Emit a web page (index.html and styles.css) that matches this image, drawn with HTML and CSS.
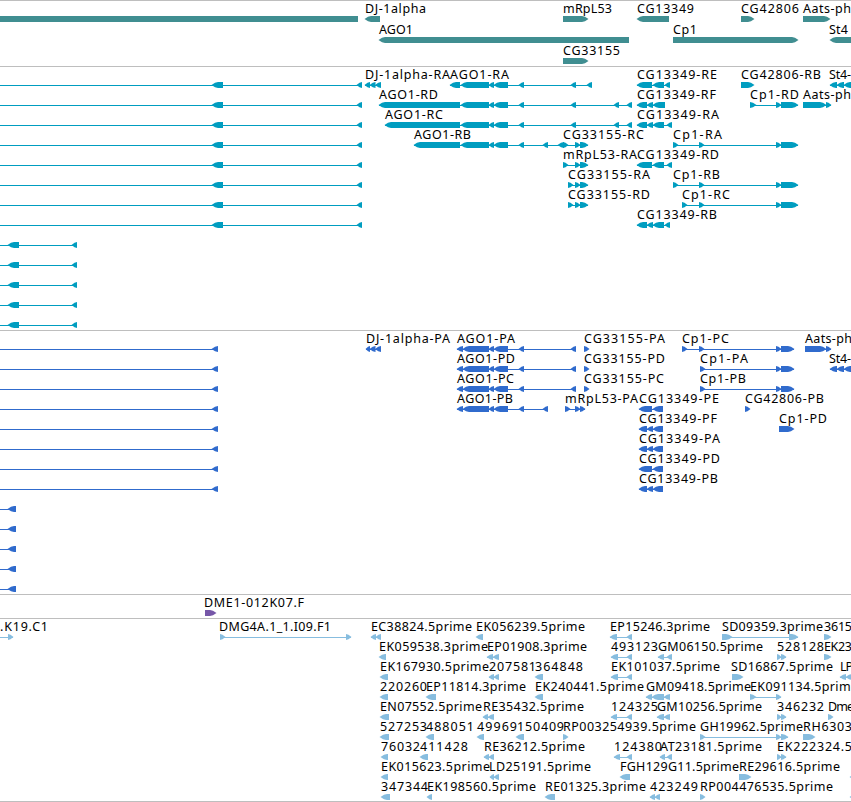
FILE: index.html
```
<!DOCTYPE html>
<html lang="en">
<head>
<meta charset="utf-8">
<title>Genome tracks</title>
<link rel="stylesheet" href="styles.css">
</head>
<body>
<main class="browser">
<section class="track genes"><svg id="genes" width="851" height="65"></svg></section>
<section class="track transcripts"><svg id="transcripts" width="851" height="263"></svg></section>
<section class="track proteins"><svg id="proteins" width="851" height="263"></svg></section>
<section class="track bac"><svg id="bac" width="851" height="23"></svg></section>
<section class="track est"><svg id="est" width="851" height="182"></svg></section>
</main>
<script src="tracks.js"></script>
</body>
</html>
```
FILE: styles.css
```
body { margin: 0; background: #fff; overflow: hidden; }
.browser { display: flex; flex-direction: column; width: 851px; }
.track { border-top: 1px solid #bebebe; }
.est { border-bottom: 1px solid #bebebe; }
.track svg { display: block; overflow: hidden; }
.track text { font: 12.5px "Noto Sans", "DejaVu Sans", sans-serif; fill: #000; }
.genes { color: #408e91; }
.transcripts { color: #009dc0; }
.proteins { color: #306bcd; }
.bac { color: #7657a8; }
.est { color: #87bddf; }
.feature { fill: currentColor; }
.intron { fill: currentColor; shape-rendering: crispEdges; }
```
FILE: tracks.js
```
// Each feature: row | label | label start | label end | strand | exon ranges
const SVG = "http://www.w3.org/2000/svg";

function add(parent, name, attrs) {
  const el = document.createElementNS(SVG, name);
  for (const key in attrs) el.setAttribute(key, attrs[key]);
  parent.appendChild(el);
  return el;
}

function draw(id, pitch, lines) {
  const svg = document.getElementById(id);
  lines.trim().split("\n").forEach(line => {
    const [row, label, start, end, strand, ranges] = line.split("|");
    const top = 15 + row * pitch;
    const exons = ranges.split(",").map(r => r.split(":").map(Number));
    const first = exons[0][0], last = exons[exons.length - 1][1];
    if (exons.length > 1) add(svg, "rect", { class: "intron", x: first, y: top + 3, width: last - first, height: 1 });
    exons.forEach(([a, b]) => {
      if (a < 0 && b <= 0) return;
      const w = b - a;
      const head = Math.min(w, 6);
      const bottom = top + 6, mid = top + 3;
      let points;
      if (strand === "-") {
        points = `${a - .5},${mid} ${a + head * .5},${top + .8} ${a + head},${top} ${b},${top} ${b},${bottom} ${a + head},${bottom} ${a + head * .5},${bottom - .8}`;
      } else if (strand === "+") {
        points = `${b + .5},${mid} ${b - head * .5},${top + .8} ${b - head},${top} ${a},${top} ${a},${bottom} ${b - head},${bottom} ${b - head * .5},${bottom - .8}`;
      } else {
        points = `${a},${top} ${b},${top} ${b},${bottom} ${a},${bottom}`;
      }
      add(svg, "polygon", { class: "feature", points });
    });
    if (label) {
      const text = add(svg, "text", { x: start, y: top - 3, textLength: end - start, lengthAdjust: "spacing" });
      text.textContent = label;
    }
  });
}

const rows = (from, to, rest) => Array.from({ length: to - from + 1 }, (_, i) => (from + i) + rest).join("\n");

draw("genes", 21, `
0||||=|0:358
0|DJ-1alpha|365|426|-|365:380
0|mRpL53|563|612|+|563:588
0|CG13349|637|694|-|637:669
0|CG42806|741|799|+|741:754
0|Aats-ph|803|851|+|803:830
1|AGO1|379|413|-|379:629
1|Cp1|673|697|+|673:798
1|St4|829|848|-|830:860
2|CG33155|563|620|+|563:588`);

draw("transcripts", 20, rows(0, 7, "||||-|-10:-5,212:223,357:362") + "\n" + rows(8, 12, "||||-|-10:-5,8:19,72:77") + `
0|DJ-1alpha-RA|365|450|-|365:370,370:375.5,375.5:381
0|AGO1-RA|450|509|-|450:460,461:489,489:494,494:508,519:524,571:576,587:592
1|AGO1-RD|379|438|-|379:460,461:489,489:494,494:508,519:524,571:576,614:619,627:632
2|AGO1-RC|385|443|-|385:460,461:489,489:494,494:508,519:524,571:576,614:619,627:632
3|AGO1-RB|414|471|-|414:460,461:489,489:494,494:508,519:524,543:548,558:564
3|CG33155-RC|563|644|+|563:568,575:580,580:588
4|mRpL53-RA|563|637|+|563:568,575:580,580:588
5|CG33155-RA|568|650|+|568:573,575:580,580:588
6|CG33155-RD|568|650|+|568:573,575:580,580:588
0|CG13349-RE|637|717|-|637:652,653:664,665:670
1|CG13349-RF|637|716|-|637:647,647:653,653:665
2|CG13349-RA|637|719|-|637:647,647:653,653:664,667:672
4|CG13349-RD|637|719|-|637:652,653:664,667:672
7|CG13349-RB|637|717|-|637:647,647:653,653:664,665:670
0|CG42806-RB|741|821|+|741:754
1|Cp1-RD|750|799|+|750:756,776:781,781:798
1|Aats-ph|803|851|+|803:826,826:831
0|St4-|829|851|-|830:837,837:844,844:852
3|Cp1-RA|673|722|+|673:678,699:704,776:781,781:798
5|Cp1-RB|673|720|+|673:678,699:704,776:781,781:798
6|Cp1-RC|682|730|+|682:687,699:704,776:781,781:798`);

draw("proteins", 20, rows(0, 7, "||||-|-10:-5,212:218") + "\n" + rows(8, 12, "||||-|-10:-5,8:16") + `
0|DJ-1alpha-PA|366|450|-|366:370,370:375.5,375.5:381
0|AGO1-PA|457|515|-|457:463,463:489,489:494,494:508,519:524,571:576
1|AGO1-PD|457|515|-|457:463,463:489,489:494,494:508,519:524,571:576
2|AGO1-PC|457|514|-|457:463,463:489,489:494,494:508,519:524,571:576
3|AGO1-PB|457|513|-|457:463,463:489,489:494,494:508,519:524,543:548
0|CG33155-PA|584|665|+|584:589
1|CG33155-PD|584|665|+|584:589
2|CG33155-PC|584|664|+|584:589
3|mRpL53-PA|565|638|+|565:570,575:580,580:585
3|CG13349-PE|639|719|-|639:652,653:663
4|CG13349-PF|639|717|-|639:647,647:653,653:663
5|CG13349-PA|639|720|-|639:647,647:653,653:663
6|CG13349-PD|639|720|-|639:652,653:663
7|CG13349-PB|639|718|-|639:647,647:653,653:663
0|Cp1-PC|682|729|+|682:687,699:704,776:781,781:794
1|Cp1-PA|700|748|+|700:705,776:781,781:794
2|Cp1-PB|700|746|+|700:705,776:781,781:794
3|CG42806-PB|745|824|+|745:750
4|Cp1-PD|779|827|+|779:794
0|Aats-ph|805|852|+|805:826,826:831
1|St4-|829|851|-|830:837,837:844,844:852`);

draw("bac", 20, `0|DME1-012K07.F|204|304|+|205:216`);

draw("est", 20, `
0|.K19.C1|0|48|+|-10:-5,8:13
0|DMG4A.1_1.I09.F1|219|331|+|220:225,346:351
0|EC38824.5prime|371|472|-|371:376,376:381
0|EK056239.5prime|476|585|-|476:483
0|EP15246.3prime|610|710|-|610:617,627:632
0|SD09359.3prime|722|823|+|722:732,789:798
0|3615|824|852|+|824:831
1|EK059538.3prime|379|488|-|379:386
1|EP01908.3prime|487|587|-|487:493,493:499
1|493123|611|658|-|611:618,627:632
1|GM06150.5prime|658|763|-|658:664,667:672
1|528128|777|824|+|777:781,781:786
1|EK23|824|852|+|824:831
2|EK167930.5prime|380|489|-|380:388
2|207581|489|536|-|489:494,494:499
2|364848|535|583|-|535:543
2|EK101037.5prime|611|720|-|611:618,627:632
2|SD16867.5prime|731|833|+|732:743
2|LP|840|853|-|840:846,846:852
3|220260|380|427|-|380:388
3|EP11814.3prime|426|526|-|426:436
3|EK240441.5prime|535|644|-|535:543
3|GM09418.5prime|646|751|-|646:652,652:664,664:670
3|EK091134.5prime|750|858|+|750:756,776:781
4|EN07552.5prime|380|482|-|380:389
4|RE35432.5prime|483|584|-|483:488,488:494
4|124325|611|658|-|611:617,627:632
4|GM10256.5prime|657|762|-|657:664,664:670
4|346232|777|824|+|777:781,781:786
4|Dme|828|854|+|828:833
5|527253|380|427|-|380:389
5|488051|426|474|-|426:434
5|49969|477|517|-|477:484
5|150409|517|564|-|516:524
5|RP003254939.5prime|563|696|+|563:568
5|GH19962.5prime|700|803|+|700:705,776:781,781:788
5|RH6303|803|852|+|803:815
6|76032|381|420|-|381:388
6|411428|420|468|-|420:428
6|RE36212.5prime|484|585|-|484:489,489:494
6|124380|614|662|-|614:620,627:632
6|AT23181.5prime|660|762|-|660:665,667:672
6|EK222324.5|777|852|+|777:781,781:786
7|EK015623.5prime|381|490|-|381:388
7|LD25191.5prime|489|591|-|490:494,494:499
7|FGH129G11.5prime|620|739|-|620:630
7|RE29616.5prime|739|840|+|739:751
7||||-|850:856
8|347344|381|428|-|381:390
8|EK198560.5prime|427|536|-|427:432
8|RE01325.3prime|545|646|-|545:555
8|423249|650|698|-|650:655,655:660
8|RP004476535.5prime|700|833|+|700:705
8||||-|850:856`);
```
